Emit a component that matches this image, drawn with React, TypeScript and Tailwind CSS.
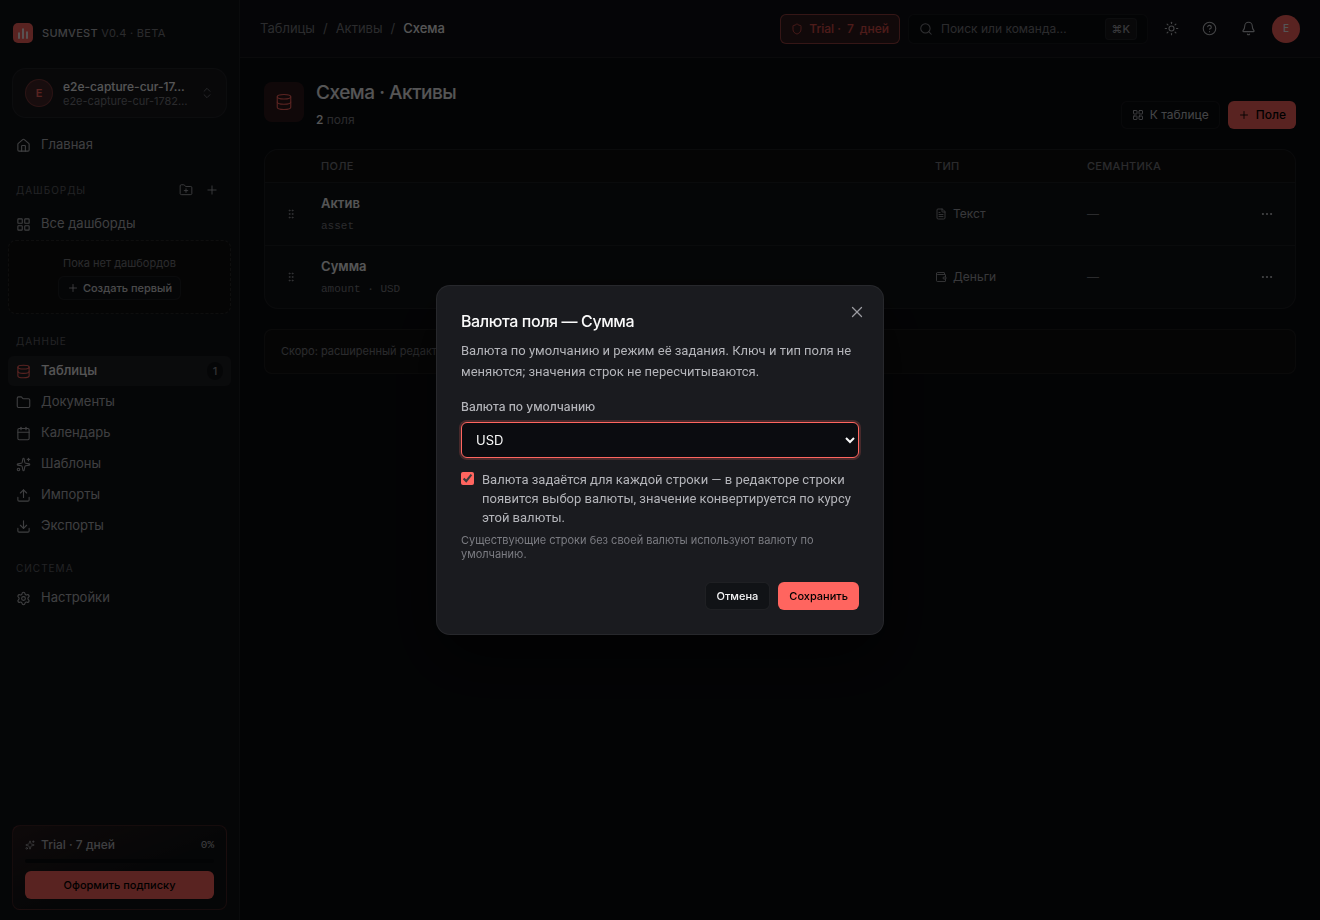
import { useState, type ReactNode } from 'react'
import {
  Bell,
  Calendar,
  ChevronsUpDown,
  CircleHelp,
  Database,
  Download,
  Ellipsis,
  FileText,
  Folder,
  FolderPlus,
  GripVertical,
  House,
  LayoutGrid,
  Plus,
  Search,
  Settings,
  Shield,
  Sparkles,
  Sun,
  Upload,
  Wallet,
  X,
  type LucideIcon,
} from 'lucide-react'

// ─── Data ──────────────────────────────────────────────────────────────────────

interface NavEntry {
  label: string
  icon: LucideIcon
  active?: boolean
  count?: number
}

const DATA_NAV: NavEntry[] = [
  { label: 'Таблицы', icon: Database, active: true, count: 1 },
  { label: 'Документы', icon: Folder },
  { label: 'Календарь', icon: Calendar },
  { label: 'Шаблоны', icon: Sparkles },
  { label: 'Импорты', icon: Upload },
  { label: 'Экспорты', icon: Download },
]

const FIELDS = [
  { name: 'Актив', meta: 'asset', type: 'Текст', icon: FileText },
  { name: 'Сумма', meta: 'amount · USD', type: 'Деньги', icon: Wallet },
]

const CURRENCIES = ['USD', 'EUR', 'RUB', 'GBP', 'CNY']

// ─── Sidebar ───────────────────────────────────────────────────────────────────

function NavItem({ label, icon: Icon, active, count }: NavEntry) {
  return (
    <a
      href="#"
      className={`flex h-[30px] items-center gap-2.5 rounded-md px-2 text-[13px] ${
        active ? 'bg-[#1f2024] font-medium text-zinc-100' : 'text-[#b4b5ba]'
      }`}
    >
      <Icon className={`size-[15px] shrink-0 ${active ? 'text-[#ff655f]' : ''}`} strokeWidth={1.75} />
      <span className="flex-1">{label}</span>
      {count !== undefined && (
        <span className="flex h-[18px] w-4 items-center justify-center rounded-full bg-[#111316] text-[11px] text-[#8b8c92]">
          {count}
        </span>
      )}
    </a>
  )
}

function SectionLabel({ children }: { children: ReactNode }) {
  return <h2 className="px-2 text-[10px] leading-4 tracking-widest text-[#63646a] uppercase">{children}</h2>
}

function Sidebar() {
  return (
    <aside className="flex w-60 shrink-0 flex-col border-r border-white/6 bg-[#111316]">
      <div className="flex h-[66px] items-center gap-[9px] px-[13px]">
        <span className="flex size-5 items-center justify-center rounded-[5px] bg-[#ff655f]">
          <svg viewBox="0 0 20 20" className="size-5" fill="none" stroke="#fff" strokeWidth="1.75" strokeLinecap="round">
            <path d="M6 10v5M10 6v9M14 9v6" />
          </svg>
        </span>
        <p className="text-[11px] font-medium tracking-wide text-[#b4b5ba] uppercase">
          Sumvest <span className="font-normal text-[#7b7c82]">v0.4 · beta</span>
        </p>
      </div>

      <button
        type="button"
        className="mx-3 mt-0.5 flex h-[50px] items-center gap-2.5 rounded-[14px] border border-white/6 bg-[#17181c] px-3 text-left"
      >
        <span className="flex size-7 shrink-0 items-center justify-center rounded-full border border-[#ff655f]/30 bg-[#ff655f]/20 text-[11px] font-semibold text-[#ff655f]">
          E
        </span>
        <span className="flex-1 whitespace-nowrap">
          <span className="block text-xs leading-[15px] font-medium text-zinc-100">e2e-capture-cur-17…</span>
          <span className="block text-[11px] leading-[14px] text-[#7b7c82]">e2e-capture-cur-1782…</span>
        </span>
        <ChevronsUpDown className="size-3.5 shrink-0 text-[#7b7c82]" strokeWidth={1.5} />
      </button>

      <nav className="mt-3 px-2">
        <NavItem label="Главная" icon={House} />

        <div className="mt-[19px] mb-2 flex h-[22px] items-center">
          <SectionLabel>Дашборды</SectionLabel>
          <button type="button" aria-label="Новая папка" className="ml-auto p-1.5 text-[#b4b5ba]">
            <FolderPlus className="size-3.5" strokeWidth={1.5} />
          </button>
          <button type="button" aria-label="Новый дашборд" className="mr-1.5 p-1.5 text-[#b4b5ba]">
            <Plus className="size-3.5" strokeWidth={1.5} />
          </button>
        </div>
        <NavItem label="Все дашборды" icon={LayoutGrid} />

        <div className="mt-px flex h-[74px] flex-col items-center justify-center gap-1 rounded-lg border border-dashed border-white/10 bg-[#111111]">
          <p className="text-[11px] leading-[18px] text-[#7b7c82]">Пока нет дашбордов</p>
          <button
            type="button"
            className="flex h-6 items-center gap-1 rounded-md border border-white/6 bg-[#111316] px-2 text-[11px] font-medium text-[#d4d4d8]"
          >
            <Plus className="size-3" strokeWidth={1.5} />
            Создать первый
          </button>
        </div>

        <div className="mt-[19px] mb-[7px]">
          <SectionLabel>Данные</SectionLabel>
        </div>
        <div className="flex flex-col gap-px">
          {DATA_NAV.map((item) => (
            <NavItem key={item.label} {...item} />
          ))}
        </div>

        <div className="mt-[19px] mb-[7px]">
          <SectionLabel>Система</SectionLabel>
        </div>
        <NavItem label="Настройки" icon={Settings} />
      </nav>

      <section className="mx-3 mt-auto mb-2.5 rounded-lg border border-[#ff655f]/20 bg-linear-to-br from-[#ff655f]/10 to-transparent to-60% px-3 py-2.5">
        <div className="flex h-[18px] items-center gap-1.5 text-xs font-medium text-[#b4b5ba]">
          <Sparkles className="size-2.5" strokeWidth={1.75} />
          Trial · 7 дней
          <span className="ml-auto font-['Liberation_Mono',monospace] text-[11px] font-normal">0%</span>
        </div>
        <div className="mt-[5px] h-1 rounded-full bg-[#0b0c10]" />
        <button type="button" className="mt-2 block h-7 w-full rounded-md bg-[#ff655f] text-[11px] font-medium text-black">
          Оформить подписку
        </button>
      </section>
    </aside>
  )
}

// ─── Top bar ───────────────────────────────────────────────────────────────────

function TopBar() {
  return (
    <header className="flex h-[58px] items-center gap-2 border-b border-white/6 bg-[#0f1014] px-5">
      <nav aria-label="Навигация" className="flex flex-1 gap-2 text-[13px] text-[#7b7c82]">
        <a href="#">Таблицы</a>
        <span>/</span>
        <a href="#">Активы</a>
        <span>/</span>
        <span className="font-medium text-zinc-100">Схема</span>
      </nav>
      <button
        type="button"
        className="flex h-[30px] items-center gap-1.5 rounded-md border border-[#ff655f]/50 bg-[#ff655f]/15 px-2.5 text-xs font-medium text-[#e0504b]"
      >
        <Shield className="size-3" strokeWidth={1.75} />
        <span>Trial ·</span>
        <span>7</span>
        <span>дней</span>
      </button>
      <label className="flex h-[30px] w-60 items-center gap-2 rounded-md border border-white/6 bg-[#0b0c10] px-2.5">
        <Search className="size-3.5 shrink-0 text-[#8b8c92]" strokeWidth={1.75} />
        <input
          type="text"
          aria-label="Поиск"
          placeholder="Поиск или команда…"
          className="min-w-0 flex-1 bg-transparent text-xs outline-none placeholder:text-[#7b7c82]"
        />
        <kbd className="rounded border border-white/6 bg-[#17181c] px-1.5 font-['Inter','DejaVu_Sans',sans-serif] text-[11px] leading-5 font-medium text-[#a1a2a8]">
          ⌘K
        </kbd>
      </label>
      <button type="button" aria-label="Тема" className="flex size-[30px] items-center justify-center text-[#c4c5ca]">
        <Sun className="size-[15px]" strokeWidth={1.75} />
      </button>
      <button type="button" aria-label="Помощь" className="flex size-[30px] items-center justify-center text-[#c4c5ca]">
        <CircleHelp className="size-[15px]" strokeWidth={1.75} />
      </button>
      <button type="button" aria-label="Уведомления" className="flex size-8 items-center justify-center text-[#c4c5ca]">
        <Bell className="size-[15px]" strokeWidth={1.75} />
      </button>
      <button type="button" className="size-7 rounded-full bg-[#ff655f] text-[10px] font-medium text-zinc-100">
        E
      </button>
    </header>
  )
}

// ─── Schema page ───────────────────────────────────────────────────────────────

function FieldTable() {
  return (
    <div className="mt-5 overflow-hidden rounded-[14px] border border-white/6 bg-[#111316]">
      <table className="w-full table-fixed border-collapse text-left">
        <thead className="bg-[#111111]">
          <tr className="h-8 text-[11px] tracking-wide text-[#7b7c82] uppercase">
            <th className="w-10" aria-label="Порядок" />
            <th className="px-4 font-medium">Поле</th>
            <th className="w-[152px] px-4 font-medium">Тип</th>
            <th className="w-40 px-4 font-medium">Семантика</th>
            <th className="w-16" aria-label="Действия" />
          </tr>
        </thead>
        <tbody>
          {FIELDS.map(({ name, meta, type, icon: Icon }) => (
            <tr key={name} className="h-[63px] border-t border-white/6">
              <td className="pl-5">
                <GripVertical className="size-3 text-[#a1a2a8]" strokeWidth={1.5} />
              </td>
              <td className="px-4">
                <p className="text-[13px] leading-5 font-semibold text-zinc-100">{name}</p>
                <p className="mt-1 font-['Liberation_Mono',monospace] text-[11px] leading-[18px] text-[#7b7c82]">{meta}</p>
              </td>
              <td className="px-4">
                <span className="flex items-center gap-1.5 text-xs text-[#a1a2a8]">
                  <Icon className="size-3" strokeWidth={1.75} />
                  {type}
                </span>
              </td>
              <td className="px-4 text-xs text-[#7b7c82]">—</td>
              <td className="pr-3.5 text-right">
                <button type="button" aria-label="Действия" className="inline-flex size-7 items-center justify-center align-middle text-[#c4c5ca]">
                  <Ellipsis className="size-3.5" strokeWidth={1.75} />
                </button>
              </td>
            </tr>
          ))}
        </tbody>
      </table>
    </div>
  )
}

function SchemaPage() {
  return (
    <main className="flex-1 p-6">
      <div className="flex items-end justify-between">
        <div className="flex items-start gap-3">
          <span className="flex size-10 items-center justify-center rounded-lg bg-[#ff655f]/15 text-[#ff655f]">
            <Database className="size-[18px]" strokeWidth={1.5} />
          </span>
          <div>
            <h1 className="text-[19px] leading-[22px] font-medium tracking-tight text-zinc-100">Схема · Активы</h1>
            <p className="mt-1.5 text-xs leading-[19px] text-[#7b7c82]">
              <span className="font-medium text-zinc-100">2</span> поля
            </p>
          </div>
        </div>
        <div className="flex gap-2">
          <button
            type="button"
            className="flex h-7 items-center gap-1.5 rounded-md border border-white/6 bg-[#0b0c10] px-2.5 text-xs text-[#c4c5ca]"
          >
            <LayoutGrid className="size-3" strokeWidth={1.75} />
            К таблице
          </button>
          <button type="button" className="flex h-7 items-center gap-1.5 rounded-md bg-[#ff655f] px-2.5 text-xs font-medium text-black">
            <Plus className="size-3" strokeWidth={1.75} />
            Поле
          </button>
        </div>
      </div>
      <FieldTable />
      <p className="mt-5 rounded-lg border border-white/6 bg-[#111111] px-4 py-3 text-[11px] leading-[19px] text-[#7b7c82]">
        Скоро: расширенный редактор
      </p>
    </main>
  )
}

// ─── Currency dialog ───────────────────────────────────────────────────────────

function CurrencyDialog() {
  const [currency, setCurrency] = useState('USD')
  const [perRow, setPerRow] = useState(true)

  return (
    <div className="fixed inset-0 flex items-center justify-center bg-black/65">
      <div
        role="dialog"
        aria-modal="true"
        aria-labelledby="dialog-title"
        className="relative w-full max-w-md rounded-[14px] border border-white/6 bg-[#1a1b1f] p-6 shadow-[0_24px_64px_rgba(0,0,0,0.6)]"
      >
        <button type="button" aria-label="Закрыть" className="absolute top-4 right-4 p-px text-[#9a9ba0]">
          <X className="size-[18px]" strokeWidth={1.75} />
        </button>
        <h2 id="dialog-title" className="text-base leading-[22px] font-medium tracking-tight text-zinc-50">
          Валюта поля — Сумма
        </h2>
        <p className="mt-2 font-['Roboto',sans-serif] text-[13px] leading-[21px] text-[#b4b5ba]">
          Валюта по умолчанию и режим её задания. Ключ и тип поля не меняются; значения строк не пересчитываются.
        </p>

        <label htmlFor="currency" className="mt-4 block text-xs leading-[18px] font-medium text-[#b4b5ba]">
          Валюта по умолчанию
        </label>
        <select
          id="currency"
          value={currency}
          onChange={(e) => setCurrency(e.target.value)}
          className="mt-1.5 block h-9 w-full rounded-md border border-[#ff655f] bg-[#0b0c10] px-2.5 text-[13px] text-zinc-50 ring-2 ring-[#ff655f]/20 outline-none"
        >
          {CURRENCIES.map((c) => (
            <option key={c}>{c}</option>
          ))}
        </select>

        <label className="mt-3 flex items-start gap-2 font-['Roboto',sans-serif] text-[13px] leading-[19px] text-[#b4b5ba]">
          <input
            type="checkbox"
            checked={perRow}
            onChange={(e) => setPerRow(e.target.checked)}
            className="mt-0.5 size-[13px] shrink-0 accent-[#ff655f]"
          />
          <span>
            Валюта задаётся для каждой строки — в редакторе строки появится выбор валюты, значение конвертируется по
            курсу этой валюты.
          </span>
        </label>
        <p className="mt-1.5 text-[11px] leading-[14px] text-[#7b7c82]">
          Существующие строки без своей валюты используют валюту по умолчанию.
        </p>

        <div className="mt-[21px] flex justify-end gap-2">
          <button type="button" className="h-7 rounded-md border border-white/6 bg-[#111316] px-[11px] text-[11px] font-medium text-zinc-100">
            Отмена
          </button>
          <button type="button" className="h-7 rounded-md bg-[#ff655f] px-[11px] text-[11px] font-medium text-black">
            Сохранить
          </button>
        </div>
      </div>
    </div>
  )
}

export default function App() {
  return (
    <div className="flex min-h-screen bg-[#0b0c10] font-['Inter','Noto_Sans',sans-serif] text-zinc-100 scheme-dark">
      <Sidebar />
      <div className="flex min-w-0 flex-1 flex-col">
        <TopBar />
        <SchemaPage />
      </div>
      <CurrencyDialog />
    </div>
  )
}
